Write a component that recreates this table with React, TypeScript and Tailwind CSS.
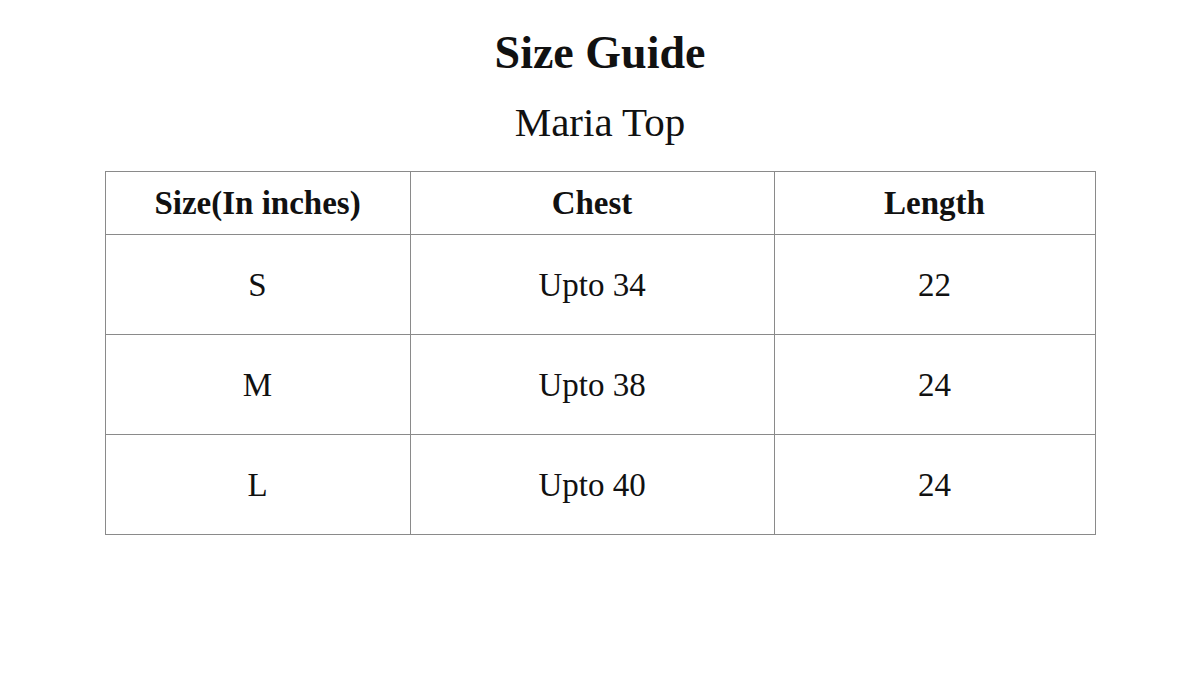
import React from "react";

const rows = [
  ["S", "Upto 34", "22"],
  ["M", "Upto 38", "24"],
  ["L", "Upto 40", "24"],
];

export default function App() {
  return (
    <div
      className="w-[1200px] h-[675px] bg-white text-[#111] flex flex-col items-center"
      style={{ fontFamily: '"Liberation Serif", serif' }}
    >
      <h1 className="mt-[27px] h-[52px] text-[46px] leading-[52px] font-bold">Size Guide</h1>
      <h2 className="mt-[19px] h-[48px] text-[41px] leading-[48px]">Maria Top</h2>
      <div className="mt-[25px] grid grid-cols-[305px_364px_321px] border-l border-t border-[#8a8a8a]">
        {["Size(In inches)", "Chest", "Length"].map((h) => (
          <div
            key={h}
            className="h-[63px] flex items-center justify-center border-r border-b border-[#8a8a8a] text-[33px] leading-[40px] font-bold"
          >
            {h}
          </div>
        ))}
        {rows.flat().map((c, i) => (
          <div
            key={i}
            className="h-[100px] flex items-center justify-center border-r border-b border-[#8a8a8a] text-[33px] leading-[40px]"
          >
            {c}
          </div>
        ))}
      </div>
    </div>
  );
}
